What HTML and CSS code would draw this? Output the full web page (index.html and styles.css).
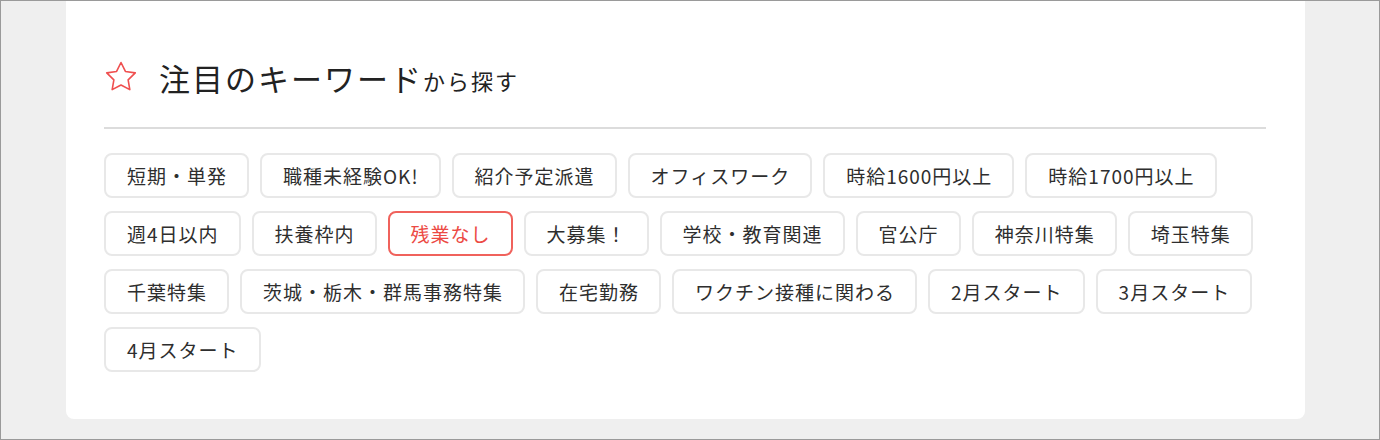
FILE: index.html
```html
<!DOCTYPE html>
<html lang="ja">
<head>
  <meta charset="utf-8" />
  <meta name="viewport" content="width=device-width, initial-scale=1" />
  <title>注目のキーワードから探す</title>
  <link rel="stylesheet" href="styles.css">
</head>
<body>
  <div class="frame">
    <section class="card">
      <h2 class="heading">
        <svg class="star" width="32" height="30" viewBox="0 0 32 30" aria-hidden="true">
          <polygon points="16,1.5 20.41,10.43 30.27,11.86 23.13,18.82 24.82,28.64 16,24 7.18,28.64 8.87,18.82 1.73,11.86 11.59,10.43"
            fill="none" stroke="#ef4f4f" stroke-width="1.6" stroke-linejoin="round" />
        </svg>
        <span class="heading-main">注目のキーワード</span><span class="heading-sub">から探す</span>
      </h2>
      <ul class="tags">
        <li><a href="#">短期・単発</a></li>
        <li><a href="#">職種未経験OK!</a></li>
        <li><a href="#">紹介予定派遣</a></li>
        <li><a href="#">オフィスワーク</a></li>
        <li><a href="#">時給1600円以上</a></li>
        <li><a href="#">時給1700円以上</a></li>
        <li><a href="#">週4日以内</a></li>
        <li><a href="#">扶養枠内</a></li>
        <li><a href="#" class="active">残業なし</a></li>
        <li><a href="#">大募集！</a></li>
        <li><a href="#">学校・教育関連</a></li>
        <li><a href="#">官公庁</a></li>
        <li><a href="#">神奈川特集</a></li>
        <li><a href="#">埼玉特集</a></li>
        <li><a href="#">千葉特集</a></li>
        <li><a href="#">茨城・栃木・群馬事務特集</a></li>
        <li><a href="#">在宅勤務</a></li>
        <li><a href="#">ワクチン接種に関わる</a></li>
        <li><a href="#">2月スタート</a></li>
        <li><a href="#">3月スタート</a></li>
        <li><a href="#">4月スタート</a></li>
      </ul>
    </section>
  </div>
</body>
</html>
```

FILE: styles.css
```css
body { margin:0; font-family:"Noto Sans CJK JP", "Noto Sans", sans-serif; color:#333; }
.frame {
  width:1380px; height:440px; box-sizing:border-box;
  border:1px solid #9a9a9a; background:#efefef; overflow:hidden;
}
.card {
  margin-left:65px; width:1239px; box-sizing:border-box;
  padding:0 39px 47px 38px;
  background:#fff; border-radius:0 0 8px 8px;
}
.heading {
  display:flex; align-items:center;
  margin:0; padding:55px 0 27px; height:44px;
  border-bottom:2px solid #dcdcdc;
  font-weight:normal; color:#222;
}
.star { margin:0 22px 4px 1px; flex:none; }
.heading-main { font-size:31px; letter-spacing:2px; line-height:44px; }
.heading-sub { font-size:22px; letter-spacing:2px; line-height:44px; margin-top:4px; }
.tags {
  list-style:none; margin:0; padding:24px 0 0;
  display:flex; flex-wrap:wrap; gap:13px 11px;
}
.tags a {
  display:block; padding:10px 20px 10px 21px;
  border:2px solid #e8e8e8; border-radius:8px;
  font-size:19px; line-height:21px; letter-spacing:1px;
  color:#2e2e2e; text-decoration:none;
}
.tags a.active { border-color:#f0625c; color:#ec4a44; }
```
